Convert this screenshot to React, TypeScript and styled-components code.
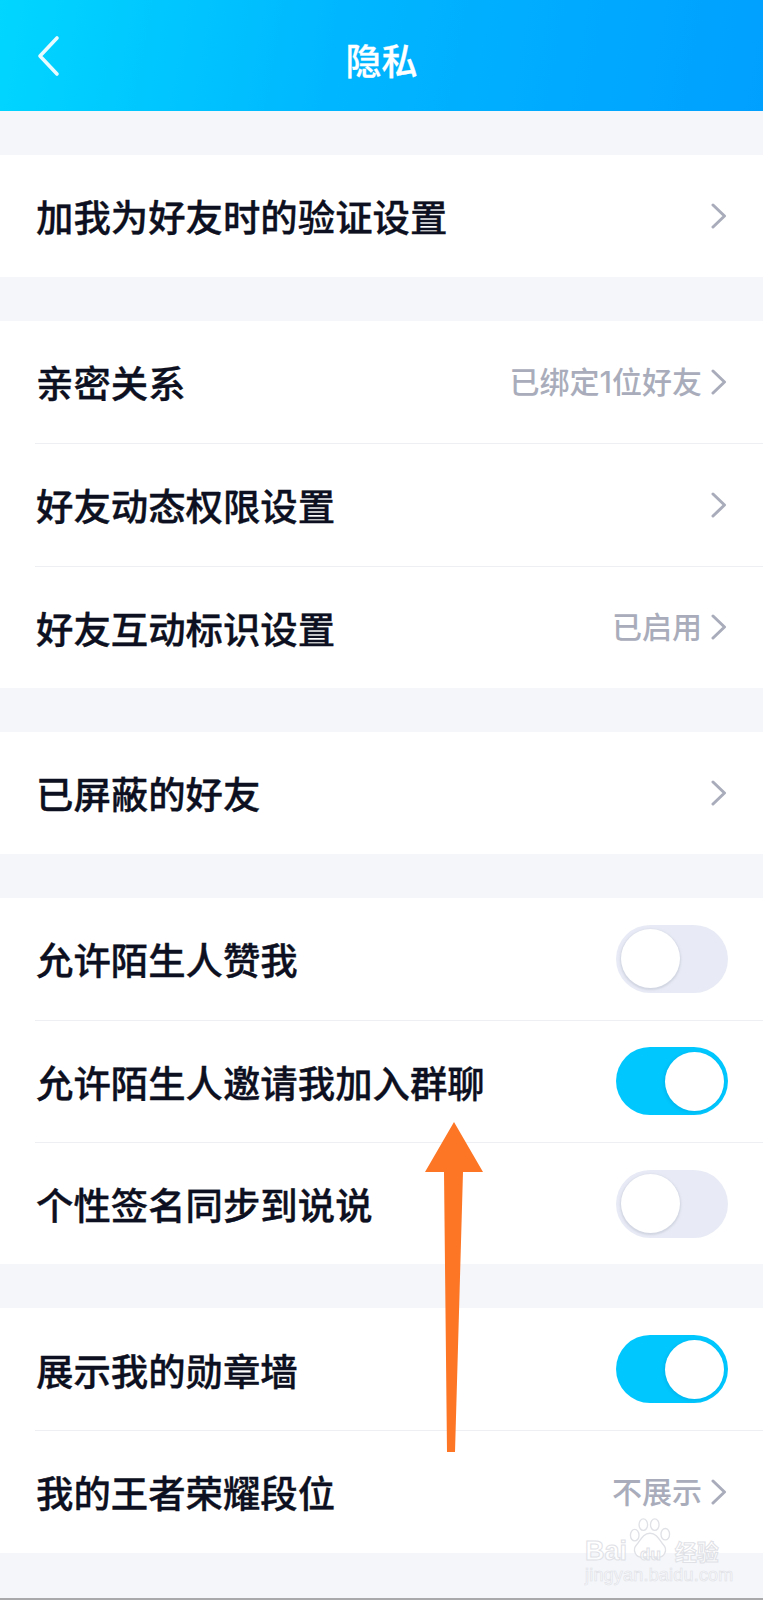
import React from "react";
import styled, { createGlobalStyle } from "styled-components";

const Global = createGlobalStyle`
  html, body { margin: 0; padding: 0; background: #f4f6fa; }
  body { font-family: "Noto Sans CJK SC", "Noto Sans", sans-serif; }
`;

const Page = styled.div`
  position: relative;
  width: 763px;
  height: 1600px;
  box-sizing: border-box;
  overflow: hidden;
  background: #f4f6fa;
  border-bottom: 2px solid #a9a9ab;
`;

const Header = styled.header`
  position: relative;
  height: 111px;
  display: flex;
  align-items: center;
  justify-content: center;
  background: linear-gradient(100deg, #00d6ff 0%, #00b6ff 45%, #00a0ff 100%);
  margin-bottom: 44px;
`;

const BackIcon = styled.svg`
  position: absolute;
  left: 37px;
  top: 35px;
`;

const Title = styled.h1`
  margin: 0;
  padding-top: 6px;
  color: #fff;
  font-size: 36px;
  font-weight: 500;
  line-height: 1;
  -webkit-text-stroke: 0.3px #fff;
`;

const Section = styled.section`
  background: #fff;
  margin-bottom: 43.7px;
`;

const Row = styled.div<{ $first?: boolean }>`
  height: 122.3px;
  box-sizing: border-box;
  margin-left: 35px;
  padding-right: 36px;
  display: flex;
  align-items: center;
  justify-content: space-between;
  border-top: ${(p) => (p.$first ? "none" : "1.5px solid #eeeff2")};
`;

const Label = styled.span`
  margin-left: 1px;
  padding-top: 2px;
  color: #0d1020;
  font-size: 37.4px;
  font-weight: 500;
  line-height: 1;
  -webkit-text-stroke: 0.35px #0d1020;
`;

const Side = styled.span`
  display: flex;
  align-items: center;
  gap: 9px;
`;

const Value = styled.span`
  font-family: "Inter", "Noto Sans CJK SC", sans-serif;
  color: #a9adbb;
  font-size: 30px;
  font-weight: 500;
  line-height: 1;
`;

const Track = styled.span<{ $on?: boolean }>`
  position: relative;
  display: block;
  width: 112px;
  height: 68px;
  margin-right: -1px;
  border-radius: 34px;
  background: ${(p) => (p.$on ? "#00c8ff" : "#e8ebf5")};
`;

const Knob = styled.span<{ $on?: boolean }>`
  position: absolute;
  top: 4.5px;
  left: ${(p) => (p.$on ? "49px" : "4.5px")};
  width: 59px;
  height: 59px;
  border-radius: 50%;
  background: #fff;
  box-shadow: ${(p) =>
    p.$on ? "-1px 1px 4px rgba(0, 90, 150, 0.2)" : "0 1px 2px 1px rgba(190, 194, 210, 0.55)"};
`;

const Arrow = styled.svg`
  position: absolute;
  left: 420px;
  top: 1118px;
`;

const Watermark = styled.div`
  position: absolute;
  left: 584px;
  top: 1516px;
  width: 140px;
  height: 70px;
  font-family: "Liberation Sans", sans-serif;
`;

const Paw = styled.svg`
  position: absolute;
  left: 44px;
  top: 2px;
`;

const Brand = styled.div`
  position: absolute;
  left: 1px;
  top: 19px;
  display: flex;
  align-items: baseline;
  font-size: 27px;
  line-height: 30px;
  font-weight: 700;
  color: rgba(255, 255, 255, 0.7);
  -webkit-text-stroke: 1px #dfe1e6;
`;

const BrandDu = styled.span`
  font-size: 17px;
  margin: 0 14px 0 13px;
`;

const BrandCn = styled.span`
  font-family: "Noto Sans CJK SC", sans-serif;
  font-size: 22px;
`;

const Domain = styled.div`
  position: absolute;
  left: 1px;
  top: 50px;
  font-size: 18px;
  line-height: 18px;
  letter-spacing: 0.2px;
  color: rgba(255, 255, 255, 0.5);
  -webkit-text-stroke: 0.6px #dfe1e6;
  white-space: nowrap;
`;

const Chevron = () => (
  <svg width="16" height="26" viewBox="0 0 16 26" fill="none">
    <path d="M2 2 L13.5 13 L2 24" stroke="#a9adbb" strokeWidth="3" strokeLinecap="round" strokeLinejoin="round" />
  </svg>
);

type Item = { label: string; value?: string; toggle?: boolean; on?: boolean };

const sections: Item[][] = [
  [{ label: "加我为好友时的验证设置" }],
  [
    { label: "亲密关系", value: "已绑定1位好友" },
    { label: "好友动态权限设置" },
    { label: "好友互动标识设置", value: "已启用" },
  ],
  [{ label: "已屏蔽的好友" }],
  [
    { label: "允许陌生人赞我", toggle: true },
    { label: "允许陌生人邀请我加入群聊", toggle: true, on: true },
    { label: "个性签名同步到说说", toggle: true },
  ],
  [
    { label: "展示我的勋章墙", toggle: true, on: true },
    { label: "我的王者荣耀段位", value: "不展示" },
  ],
];

export default function App() {
  return (
    <Page>
      <Global />
      <Header>
        <BackIcon width="24" height="42" viewBox="0 0 24 42" fill="none">
          <path d="M20 3 L3 21 L20 39" stroke="#e8fbff" strokeWidth="3.6" strokeLinecap="round" strokeLinejoin="round" />
        </BackIcon>
        <Title>隐私</Title>
      </Header>
      {sections.map((items, i) => (
        <Section key={i}>
          {items.map((item, j) => (
            <Row key={item.label} $first={j === 0}>
              <Label>{item.label}</Label>
              {item.toggle ? (
                <Track $on={item.on}>
                  <Knob $on={item.on} />
                </Track>
              ) : (
                <Side>
                  {item.value && <Value>{item.value}</Value>}
                  <Chevron />
                </Side>
              )}
            </Row>
          ))}
        </Section>
      ))}
      <Arrow width="68" height="338" viewBox="0 0 68 338">
        <path d="M34 4 L63 54 L43 54 L35 334 L27 334 L24 54 L5 54 Z" fill="#fd7625" />
      </Arrow>
      <Watermark>
        <Paw width="44" height="42" viewBox="0 0 46 44" fill="none" stroke="#dfe1e6" strokeWidth="1.4">
          <ellipse cx="7" cy="18" rx="4.5" ry="6" fill="#fff" />
          <ellipse cx="16" cy="7" rx="4.5" ry="6" fill="#fff" />
          <ellipse cx="28" cy="7" rx="4.5" ry="6" fill="#fff" />
          <ellipse cx="39" cy="17" rx="4.5" ry="6" fill="#fff" />
          <path d="M23 16 C15 16 13 24 9 28 C4 33 8 42 15 41 C19 40.5 27 40.5 31 41 C38 42 42 33 37 28 C33 24 31 16 23 16 Z" fill="#fff" />
        </Paw>
        <Brand>
          Bai
          <BrandDu>du</BrandDu>
          <BrandCn>经验</BrandCn>
        </Brand>
        <Domain>jingyan.baidu.com</Domain>
      </Watermark>
    </Page>
  );
}
